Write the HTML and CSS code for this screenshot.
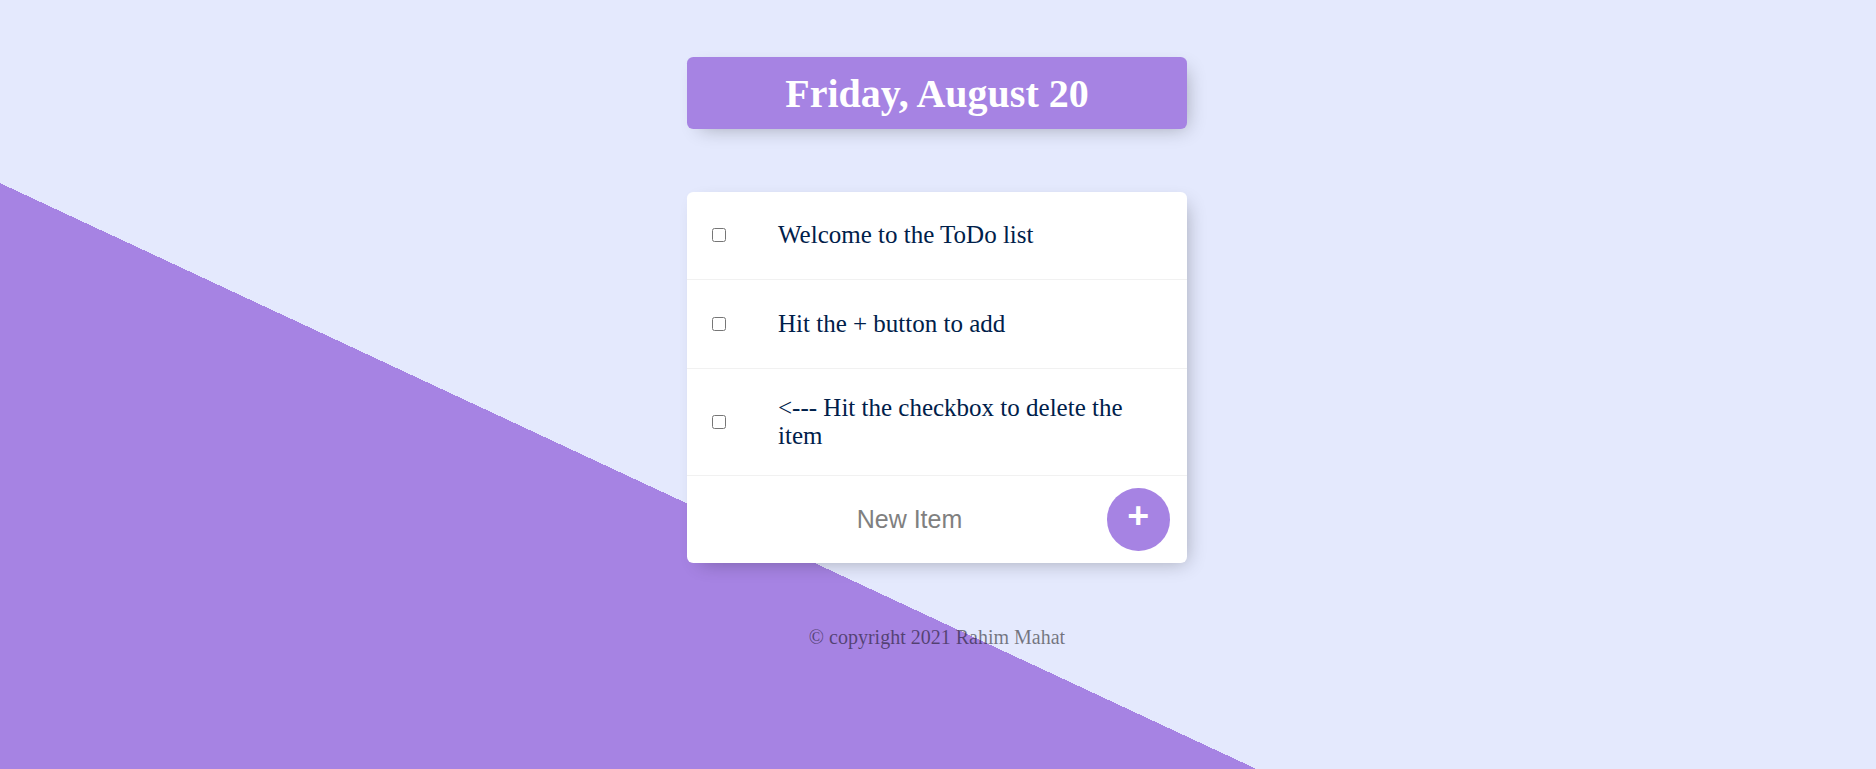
FILE: index.html
```html
<!DOCTYPE html>
<html lang="en">
<head>
<meta charset="utf-8">
<title>To-Do List</title>
<link rel="stylesheet" href="styles.css">
</head>
<body>
  <div class="box heading">
    <h1 class="title">Friday, August 20</h1>
  </div>

  <div class="box">
    <div class="item">
      <input class="check" type="checkbox">
      <p class="text">Welcome to the ToDo list</p>
    </div>
    <div class="item">
      <input class="check" type="checkbox">
      <p class="text">Hit the + button to add</p>
    </div>
    <div class="item">
      <input class="check" type="checkbox">
      <p class="text">&lt;--- Hit the checkbox to delete the item</p>
    </div>
    <form class="item new-item" action="#" onsubmit="return false">
      <input class="new-input" type="text" name="newItem" placeholder="New Item" autocomplete="off">
      <button class="add-btn" type="submit" name="list">+</button>
    </form>
  </div>

  <footer class="footer">© copyright 2021 Rahim Mahat</footer>
</body>
</html>
```
FILE: styles.css
```css
html {
  min-height: 100%;
  background-color: #E4E9FD;
  background-image: linear-gradient(25deg, #A683E3 50%, #E4E9FD 50%);
  background-size: 100% 1241px;
  background-repeat: no-repeat;
  font-family: "Liberation Serif", "Times New Roman", serif;
}

body {
  margin: 0;
  padding: 57px 2px 0 0;
}

.box {
  max-width: 500px;
  margin: 0 auto 62.5px;
  background: #ffffff;
  border-radius: 6.25px;
  box-shadow: 6.25px 6.25px 18.75px -6.25px rgba(0, 0, 0, 0.3);
}

.heading {
  background-color: #A683E3;
  text-align: center;
}

.title {
  margin: 0;
  padding: 12.5px;
  color: #ffffff;
  font-size: 40px;
  font-weight: bold;
  font-family: "Liberation Serif", "Times New Roman", serif;
}

.item {
  min-height: 87.5px;
  display: flex;
  align-items: center;
  border-bottom: 1px solid #F1F1F1;
}

.item:last-child {
  border-bottom: 0;
}

.check {
  width: 14px;
  height: 14px;
  margin: 0 27px 0 25px;
  flex: none;
}

.text {
  margin: 0;
  padding: 25px;
  font-size: 25px;
  font-weight: 200;
  color: #00204a;
  font-family: "Liberation Serif", "Times New Roman", serif;
}

.new-item {
  margin-left: 25px;
  text-align: center;
}

.new-input {
  text-align: center;
  height: 75px;
  border: none;
  background: transparent;
  font-family: "Liberation Sans", Arial, sans-serif;
  font-size: 25px;
  font-weight: 200;
  width: 391px;
  padding: 1px 2px;
  box-sizing: content-box;
}

.new-input:focus {
  outline: none;
  box-shadow: inset 0 -3px 0 0 #A683E3;
}

.new-input::placeholder {
  color: grey;
  opacity: 1;
}

.add-btn {
  min-height: 62.5px;
  width: 62.5px;
  flex: none;
  border-radius: 50%;
  border: 0;
  background-color: #A683E3;
  color: #ffffff;
  font-family: "Liberation Sans", Arial, sans-serif;
  font-size: 37.5px;
  font-weight: bold;
  padding: 0 0 7.5px;
  margin: 0;
}

.footer {
  color: rgba(0, 0, 0, 0.5);
  text-align: center;
  font-size: 20px;
  font-family: "Liberation Serif", "Times New Roman", serif;
}
```
